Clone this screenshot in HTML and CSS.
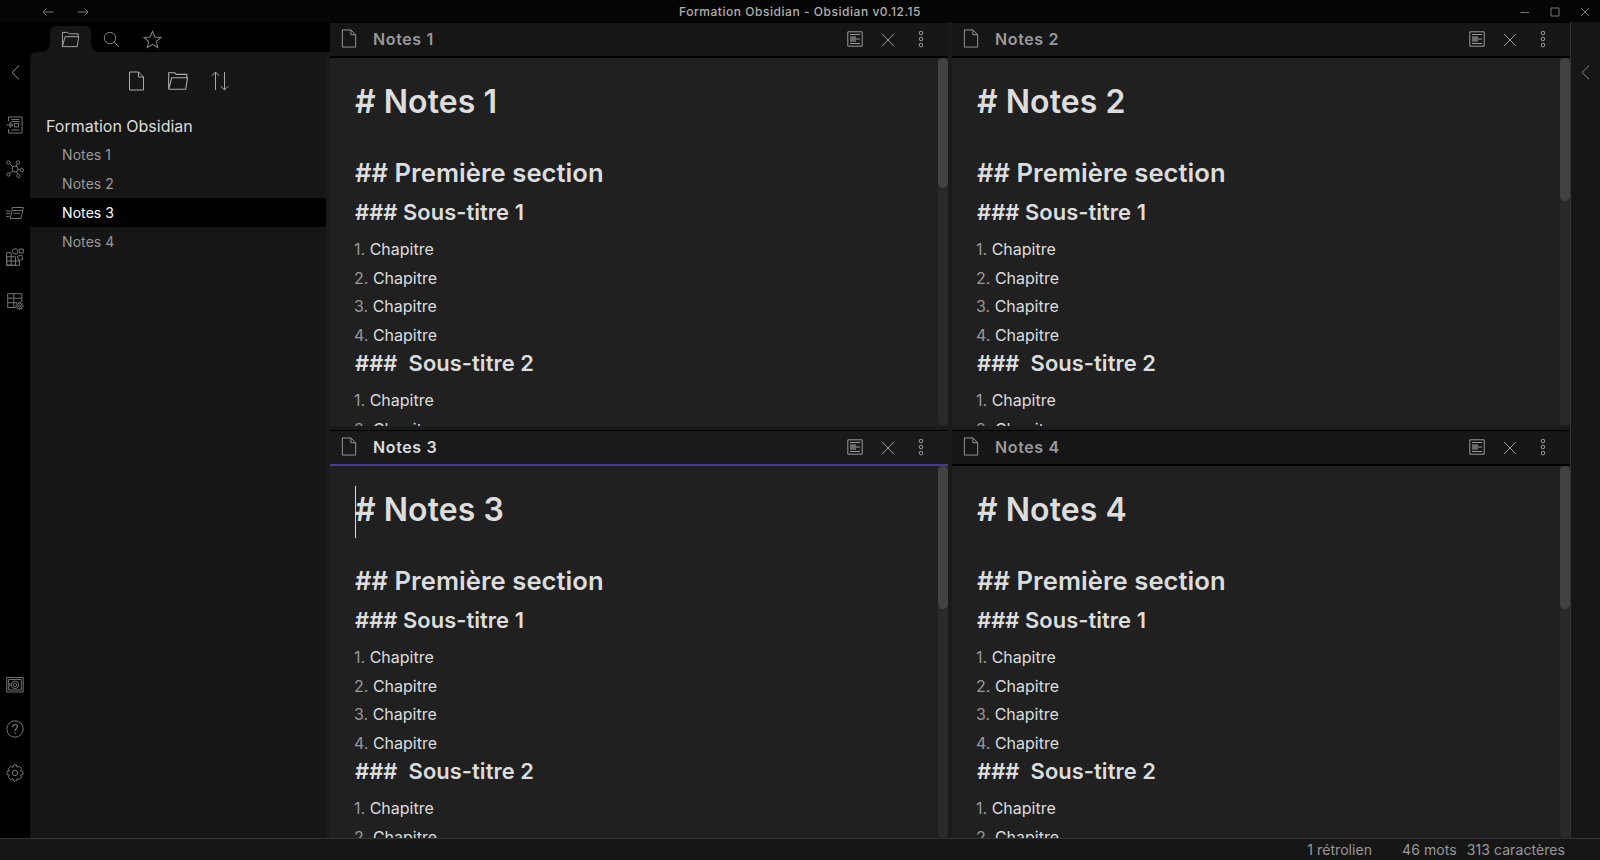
FILE: index.html
```html
<!DOCTYPE html>
<html lang="fr">
<head>
<meta charset="utf-8">
<title>Formation Obsidian - Obsidian v0.12.15</title>
<link rel="stylesheet" href="styles.css">
</head>
<body>
<svg class="defs" aria-hidden="true">
  <symbol id="doc" viewBox="0 0 16 20"><path d="M1 1H10L15 6V19H1ZM10 1V6H15"/></symbol>
  <symbol id="folder" viewBox="0 0 20 20"><path d="M1.5 17.5V2.5H7L8.5 4H18V7M1.5 17.5H17L18.7 7H4.3L1.5 17.5"/></symbol>
  <symbol id="cross" viewBox="0 0 14 14"><path d="M1 1L13 13M13 1L1 13"/></symbol>
  <symbol id="more" viewBox="0 0 6 18"><circle cx="3" cy="3" r="1.8"/><circle cx="3" cy="9" r="1.8"/><circle cx="3" cy="15" r="1.8"/></symbol>
  <symbol id="preview" viewBox="0 0 16 16"><path d="M.8.8H15.2V15.2H.8ZM3 3.5H13M3 6H9M3 8H13M3 10H9M3 12.5H13"/><path d="M3 7H9M3 9H9" opacity=".6"/></symbol>
  <symbol id="chevron" viewBox="0 0 9 15"><path d="M8 .7L1 7.5L8 14.3"/></symbol>
</svg>
<div class="app">
  <header class="titlebar">
    <div class="history">
      <svg width="12" height="8"><path d="M11.5 4H1M4.5.5L1 4L4.5 7.5"/></svg>
      <svg width="12" height="8"><path d="M.5 4H11M7.5.5L11 4L7.5 7.5"/></svg>
    </div>
    <div class="window-title">Formation Obsidian - Obsidian v0.12.15</div>
    <div class="controls">
      <svg width="10" height="10"><path d="M.5 5.5H9"/></svg>
      <svg width="10" height="10"><path d="M1 1H9V9H1Z"/></svg>
      <svg width="10" height="10"><path d="M1 1L9 9M9 1L1 9"/></svg>
    </div>
  </header>
  <main class="workspace">
    <nav class="ribbon">
      <svg class="collapse" width="9" height="15"><use href="#chevron"/></svg>
      <div class="actions">
        <svg width="18" height="18" viewBox="0 0 18 18"><path d="M2.5 5V1H16V17H2.5V13M5.5 3.5H13.5M5.5 5.5H13.5M.5 9H6M4 6.5L7 9L4 11.5ZM8.5 7.5H12.5V11H8.5ZM5.5 14H13.5"/></svg>
        <svg width="18" height="18" viewBox="0 0 18 18"><circle cx="9" cy="9" r="3"/><circle cx="2.5" cy="2.5" r="1.7"/><circle cx="12" cy="2.5" r="1.7"/><circle cx="15.8" cy="10" r="1.7"/><circle cx="2.5" cy="14.5" r="1.7"/><circle cx="12.5" cy="15.8" r="1.7"/><path d="M3.7 3.7L6.8 6.8M11.3 4L10.2 6.2M12 9.4L14 9.7M3.8 13.4L6.8 11.2M10.5 11.6L11.7 14.2"/></svg>
        <svg width="18" height="18" viewBox="0 0 18 18"><path d="M6.5 3.5H17.3L15 14.5H4L6.2 6.5H16.5M6.5 3.5L5.8 6.5M7.5 9.3H14M0 7H4.5M0 9.7H4M0 12.5H3.3"/></svg>
        <svg width="18" height="18" viewBox="0 0 18 18"><path d="M.7 4.7H5.2V17.3H.7ZM.7 8.8H9.5V17.3H.7ZM.7 13H13.5V17.3H.7M7.5 1L10.5.7L12 3.5L10.5 6.2L7.8 6L6.3 3.5ZM13.2 1H17.3V5H13.2ZM11.3 8.2L15.8 7.3L17 11.2L12.7 12.5Z"/></svg>
        <svg width="18" height="18" viewBox="0 0 18 18"><path d="M9.5 15.5H1.7V1.7H15.8V10M1.7 6.2H15.8M1.7 10.7H11M7.8 1.7V15.5"/><circle cx="13.5" cy="14" r="2.7"/><circle cx="13.5" cy="14" r="1"/><path stroke-dasharray="1.4 1.2" d="M13.5 10.3A3.7 3.7 0 1 1 13.49 10.3"/></svg>
      </div>
      <div class="actions bottom">
        <svg width="18" height="18" viewBox="0 0 18 18"><path d="M.8 1.5H17.2V16H.8ZM2.7 3.5H15.3V14H2.7ZM4 7V10"/><circle cx="9" cy="8.8" r="3.7"/><circle cx="9" cy="8.8" r="1.7"/></svg>
        <svg width="18" height="18" viewBox="0 0 18 18"><circle cx="9" cy="9" r="8.2"/><path stroke-width="1.3" d="M6.7 7.2C6.7 3.7 11.4 3.8 11.4 6.8C11.4 8.6 9 8.6 9 11M9 12.2V13.7"/></svg>
        <svg width="18" height="18" viewBox="0 0 18 18"><path d="M7.5 1H10.5L11 3.3L13.2 2.3L15.6 4.6L14.6 6.9L17 7.5V10.5L14.6 11.1L15.6 13.4L13.4 15.6L11 14.7L10.5 17H7.5L7 14.7L4.6 15.6L2.4 13.4L3.4 11.1L1 10.5V7.5L3.4 6.9L2.4 4.6L4.7 2.4L7 3.3Z"/><circle cx="9" cy="9" r="2.7"/></svg>
      </div>
    </nav>
    <aside class="sidebar">
      <div class="tabs">
        <div class="tab active"><svg width="19" height="19"><use href="#folder"/></svg></div>
        <div class="tab"><svg width="17" height="17" viewBox="0 0 17 17"><circle cx="7" cy="7" r="5.7"/><path d="M11.2 11.2L16 16"/></svg></div>
        <div class="tab"><svg width="19" height="19" viewBox="0 0 18 18"><path d="M9 1.3L11.2 6.6L17 7.1L12.6 10.9L14 16.6L9 13.5L4 16.6L5.4 10.9L1 7.1L6.8 6.6Z"/></svg></div>
      </div>
      <div class="explorer">
        <div class="tools">
          <svg width="17" height="20"><use href="#doc"/></svg>
          <svg width="22" height="22"><use href="#folder"/></svg>
          <svg width="18" height="20" viewBox="0 0 18 20"><path d="M4.5 19V1M.8 4.8L4.5 1L8.2 4.8M13.5 1V19M9.8 15.2L13.5 19L17.2 15.2"/></svg>
        </div>
        <div class="vault">Formation Obsidian</div>
        <div class="file">Notes 1</div>
        <div class="file">Notes 2</div>
        <div class="file selected">Notes 3</div>
        <div class="file">Notes 4</div>
      </div>
    </aside>
    <section class="panes">
      <article class="pane">
        <header class="pane-head">
          <svg width="16" height="19"><use href="#doc"/></svg><span class="pane-title">Notes 1</span>
          <svg width="16" height="16"><use href="#preview"/></svg><svg class="close" width="14" height="14"><use href="#cross"/></svg><svg width="6" height="18"><use href="#more"/></svg>
        </header>
        <div class="editor">
          <div class="lines">
            <h1># Notes 1</h1>
            <h2>## Première section</h2>
            <h3>### Sous-titre 1</h3>
            <p><b>1.</b> Chapitre</p><p><b>2.</b> Chapitre</p><p><b>3.</b> Chapitre</p><p><b>4.</b> Chapitre</p>
            <h3 class="next">###&nbsp; Sous-titre 2</h3>
            <p><b>1.</b> Chapitre</p><p><b>2.</b> Chapitre</p>
          </div>
          <div class="scroll"><div class="thumb short"></div></div>
        </div>
      </article>
      <article class="pane">
        <header class="pane-head">
          <svg width="16" height="19"><use href="#doc"/></svg><span class="pane-title">Notes 2</span>
          <svg width="16" height="16"><use href="#preview"/></svg><svg class="close" width="14" height="14"><use href="#cross"/></svg><svg width="6" height="18"><use href="#more"/></svg>
        </header>
        <div class="editor">
          <div class="lines">
            <h1># Notes 2</h1>
            <h2>## Première section</h2>
            <h3>### Sous-titre 1</h3>
            <p><b>1.</b> Chapitre</p><p><b>2.</b> Chapitre</p><p><b>3.</b> Chapitre</p><p><b>4.</b> Chapitre</p>
            <h3 class="next">###&nbsp; Sous-titre 2</h3>
            <p><b>1.</b> Chapitre</p><p><b>2.</b> Chapitre</p>
          </div>
          <div class="scroll"><div class="thumb"></div></div>
        </div>
      </article>
      <article class="pane current">
        <header class="pane-head">
          <svg width="16" height="19"><use href="#doc"/></svg><span class="pane-title">Notes 3</span>
          <svg width="16" height="16"><use href="#preview"/></svg><svg class="close" width="14" height="14"><use href="#cross"/></svg><svg width="6" height="18"><use href="#more"/></svg>
        </header>
        <div class="editor">
          <div class="lines">
            <h1># Notes 3<i class="caret"></i></h1>
            <h2>## Première section</h2>
            <h3>### Sous-titre 1</h3>
            <p><b>1.</b> Chapitre</p><p><b>2.</b> Chapitre</p><p><b>3.</b> Chapitre</p><p><b>4.</b> Chapitre</p>
            <h3 class="next">###&nbsp; Sous-titre 2</h3>
            <p><b>1.</b> Chapitre</p><p><b>2.</b> Chapitre</p>
          </div>
          <div class="scroll"><div class="thumb"></div></div>
        </div>
      </article>
      <article class="pane">
        <header class="pane-head">
          <svg width="16" height="19"><use href="#doc"/></svg><span class="pane-title">Notes 4</span>
          <svg width="16" height="16"><use href="#preview"/></svg><svg class="close" width="14" height="14"><use href="#cross"/></svg><svg width="6" height="18"><use href="#more"/></svg>
        </header>
        <div class="editor">
          <div class="lines">
            <h1># Notes 4</h1>
            <h2>## Première section</h2>
            <h3>### Sous-titre 1</h3>
            <p><b>1.</b> Chapitre</p><p><b>2.</b> Chapitre</p><p><b>3.</b> Chapitre</p><p><b>4.</b> Chapitre</p>
            <h3 class="next">###&nbsp; Sous-titre 2</h3>
            <p><b>1.</b> Chapitre</p><p><b>2.</b> Chapitre</p>
          </div>
          <div class="scroll"><div class="thumb"></div></div>
        </div>
      </article>
    </section>
    <nav class="ribbon right"><svg class="collapse" width="9" height="15"><use href="#chevron"/></svg></nav>
  </main>
  <footer class="status"><span>1 rétrolien</span><span class="words">46 mots</span><span>313 caractères</span></footer>
</div>
</body>
</html>
```
FILE: styles.css
```css
* { box-sizing: border-box; }
body { margin: 0; background: #000; color: #dcddde; font-family: Inter, sans-serif; overflow: hidden; }
.defs { position: absolute; width: 0; height: 0; }
svg { display: block; flex: none; fill: none; stroke: currentColor; stroke-width: 1; }
.app { display: flex; flex-direction: column; width: 1600px; height: 860px; }

.titlebar { display: grid; grid-template-columns: 1fr auto 1fr; align-items: center; height: 22px; background: #050505; color: #777; }
.history { display: flex; gap: 23px; padding: 0 0 0 42px; }
.window-title { color: #b0b0b0; font-size: 12px; font-weight: 500; letter-spacing: .54px; line-height: 22px; padding-top: 1px; }
.controls { display: flex; justify-content: flex-end; gap: 20px; padding: 1px 10px 0 0; }

.workspace { display: flex; height: 816px; }
.ribbon { display: flex; flex-direction: column; align-items: center; width: 30px; padding-top: 43px; background: #000; color: #747474; }
.collapse { color: #999; }
.actions { display: flex; flex-direction: column; gap: 26px; padding-top: 36px; }
.actions.bottom { margin-top: auto; padding: 0 0 56px; }
.ribbon.right { background: #161616; border-left: 1px solid #333; }
.ribbon.right .collapse { color: #888; margin-right: 1px; }

.sidebar { display: flex; flex-direction: column; width: 300px; background: #000; }
.tabs { display: flex; height: 30px; padding: 4px 0 0 20px; color: #808080; }
.tab { display: flex; align-items: center; justify-content: center; width: 41px; }
.tab.active { position: relative; padding-right: 1px; border-radius: 6px 6px 0 0; background: #161616; color: #aaa; }
.tab.active::before, .tab.active::after { content: ""; position: absolute; bottom: 0; width: 8px; height: 8px; }
.tab.active::before { left: -8px; background: radial-gradient(circle at 0 0, transparent 7.5px, #161616 8px); }
.tab.active::after { right: -8px; background: radial-gradient(circle at 100% 0, transparent 7.5px, #161616 8px); }
.explorer { flex: 1; background: #161616; border-right: 4px solid #1a1a1a; border-top-left-radius: 6px; }
.tools { display: flex; align-items: center; justify-content: center; gap: 22px; height: 58px; color: #aaa; }
.vault { height: 31px; padding-left: 16px; font-size: 16px; line-height: 33px; }
.file { height: 29px; padding-left: 32px; border-radius: 2px; color: #999; font-size: 14px; letter-spacing: .08px; line-height: 29px; }
.file.selected { background: #000; color: #fff; }
.vault + .file { margin-top: -1px; }

.panes { display: grid; grid-template: 404px 408px / 618px 618px; gap: 4px; width: 1240px; background: #1a1a1a; }
.pane { display: flex; flex-direction: column; min-height: 0; }
.pane-head { display: flex; align-items: center; height: 36px; padding: 0 24px 2px 11px; border-top: 1px solid #000; border-bottom: 2px solid #000; background: #161616; color: #999; }
.pane-title { flex: 1; padding: 2px 0 0 16px; font-size: 16px; font-weight: 600; letter-spacing: .62px; line-height: 29px; }
.close { margin: 2px 23px 0 18px; }
.current .pane-head { background: #1a1a1a; border-bottom-color: #483699; }
.current .pane-head svg { color: #999; }
.current .pane-title { color: #dcddde; }
.editor { display: flex; flex: 1; min-height: 0; overflow: hidden; background: #202020; }
.lines { flex: 1; padding: 20px 0 0 25px; }
.scroll { width: 10px; background: #292929; border-radius: 0 0 5px 5px; }
.thumb { height: 143px; border-radius: 5px; background: #424242; }
.thumb.short { height: 130px; }
h1, h2, h3, p { margin: 0; white-space: nowrap; }
h1, h2, h3 { font-weight: 600; letter-spacing: .05px; }
h1 { position: relative; height: 76px; font-size: 32px; line-height: 48px; }
h2 { height: 39px; font-size: 25.6px; line-height: 38px; }
h3 { height: 42px; font-size: 21.92px; line-height: 38px; }
p { height: 28.7px; margin-left: -1px; font-size: 16px; line-height: 28.7px; }
h3.next { height: 36.4px; line-height: 27px; }
p b { color: #999; font-weight: 400; }
.caret { position: absolute; left: 0; top: 0; width: 1px; height: 52px; background: #dcddde; }

.status { display: flex; justify-content: flex-end; height: 22px; padding-right: 35px; border-top: 1px solid #333; background: #161616; color: #999; font-size: 14px; letter-spacing: .07px; line-height: 22px; }
.words { margin: 0 10px 0 30px; }
```
